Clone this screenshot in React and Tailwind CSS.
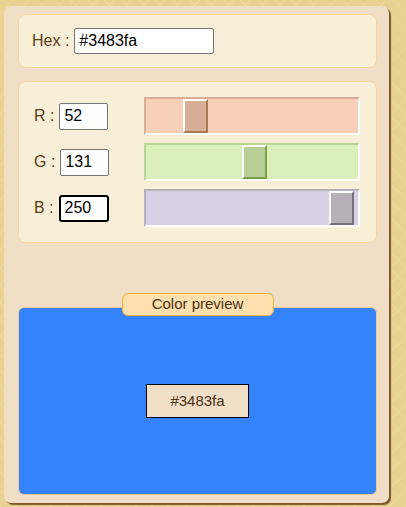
import React from 'react';

const channels = [
  { label: 'R', value: 52, track: 'bg-[#f8d0b8]', edge: 'border-t-[#d8ae96] border-l-[#d8ae96]', thumb: 'bg-[#d8ae96] border-r-[#a87a5a] border-b-[#a87a5a]', focus: false },
  { label: 'G', value: 131, track: 'bg-[#daefb9]', edge: 'border-t-[#b9d49a] border-l-[#b9d49a]', thumb: 'bg-[#b8d098] border-r-[#78a048] border-b-[#78a048]', focus: false },
  { label: 'B', value: 250, track: 'bg-[#d8d0e6]', edge: 'border-t-[#b8b0b8] border-l-[#b8b0b8]', thumb: 'bg-[#b8b0b8] border-r-[#787078] border-b-[#787078]', focus: true },
];

function Slider({ ch }) {
  return (
    <div className={`h-[38px] w-[216px] border-2 border-r-white border-b-white ${ch.edge} ${ch.track} flex items-center`}>
      <div
        className={`h-[34px] w-[25px] border-2 border-t-white border-l-white ${ch.thumb}`}
        style={{ marginLeft: Math.round((ch.value / 255) * 188) - 1 }}
      />
    </div>
  );
}

export default function App() {
  return (
    <div
      className="w-[406px] h-[507px] pt-[6px] pl-[4px] bg-[#e8d291] bg-[repeating-linear-gradient(45deg,#ecd79a_0px,#ecd79a_1px,transparent_1px,transparent_12px),repeating-linear-gradient(-45deg,#ecd79a_0px,#ecd79a_1px,transparent_1px,transparent_12px)]"
      style={{ fontFamily: '"Liberation Sans", Arial, sans-serif' }}
    >
      <div className="w-[385px] h-[497px] rounded-[7px] bg-[#f0dfc6] shadow-[2px_2px_1px_#7a5a2a] pt-[8px] pl-[14px] pr-[12px] flex flex-col">
        {/* Hex */}
        <div className="h-[54px] rounded-[8px] border border-[#fcd59a] bg-[#f8efd9] flex items-center pl-[13px] gap-[5px]">
          <span className="text-[16px] text-[#5b3a14] whitespace-nowrap">Hex :</span>
          <input
            readOnly
            value="#3483fa"
            className="w-[140px] h-[26px] bg-white border border-[#767676] rounded-[2px] px-[4px] text-[16px] text-black outline-none"
          />
        </div>

        {/* RGB */}
        <div className="mt-[13px] h-[162px] rounded-[8px] border border-[#fcd59a] bg-[#f8efd9] pt-[15px] pl-[15px] flex flex-col gap-[8px]">
          {channels.map((ch) => (
            <div key={ch.label} className="flex items-center">
              <div className="w-[110px] flex items-center gap-[5px]">
                <span className="text-[16px] text-[#5b3a14] whitespace-nowrap">{ch.label} :</span>
                <input
                  readOnly
                  value={ch.value}
                  className={`w-[49px] h-[27px] bg-white rounded-[2px] px-[4px] text-[16px] text-black outline-none ${ch.focus ? 'border-2 border-black rounded-[3px] px-[3px] w-[50px]' : 'border border-[#767676]'}`}
                />
              </div>
              <Slider ch={ch} />
            </div>
          ))}
        </div>

        {/* Preview */}
        <div className="mt-auto mb-[8px] flex flex-col items-center">
          <div className="relative z-10 w-[152px] h-[23px] rounded-[6px] border border-[#f5b335] bg-[#ffdfae] flex items-center justify-center text-[15px] text-[#4a3012]">
            Color preview
          </div>
          <div className="-mt-[9px] w-full h-[188px] rounded-[6px] border border-[#f8c98a] bg-[#3483fa] flex items-center justify-center">
            <div className="w-[103px] h-[34px] border border-black bg-[#f0dfc6] flex items-center justify-center text-[15px] text-[#4a3012]">
              #3483fa
            </div>
          </div>
        </div>
      </div>
    </div>
  );
}
